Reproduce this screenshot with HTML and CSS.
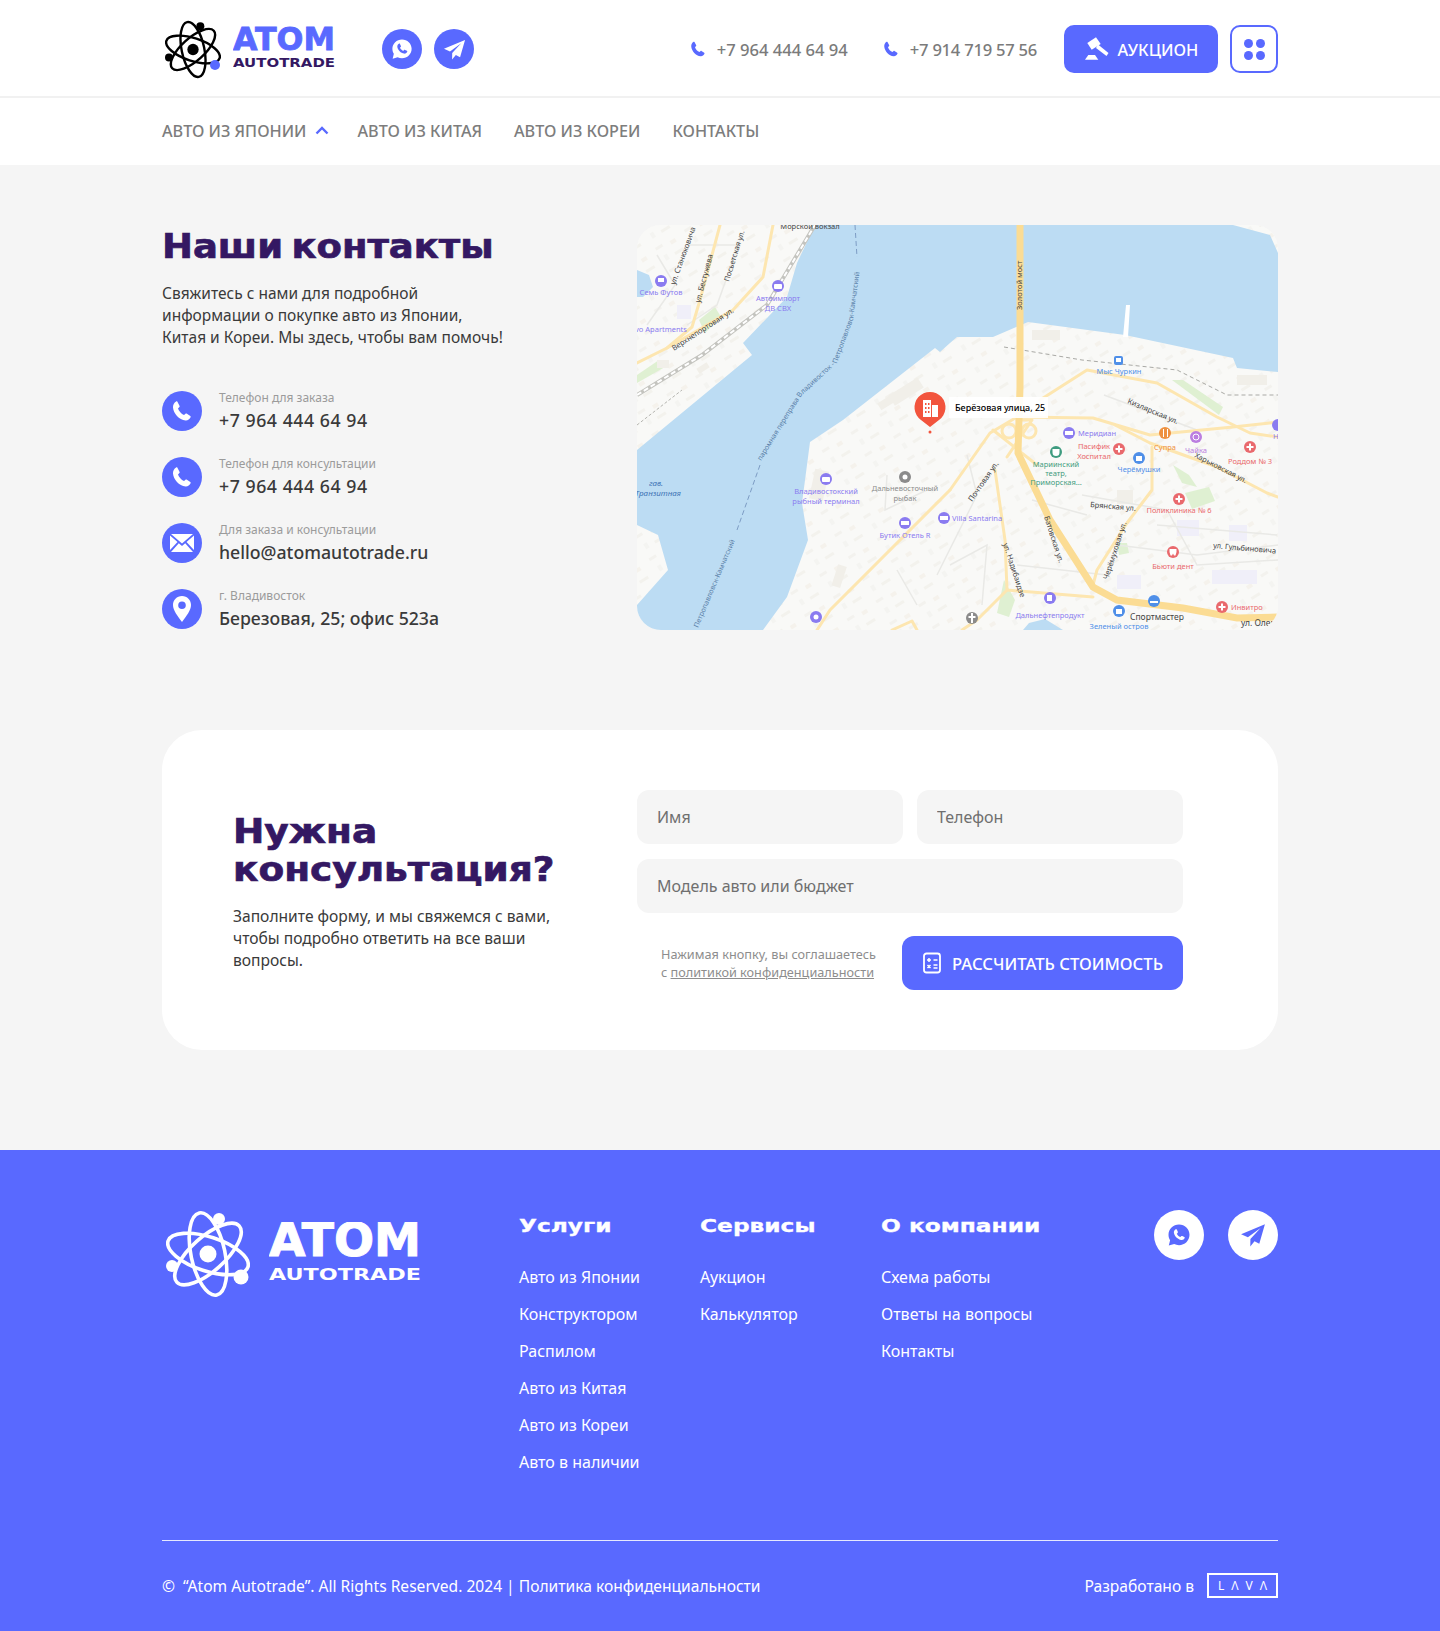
FILE: index.html
```html
<!DOCTYPE html>
<html lang="ru">
<head>
    <meta charset="UTF-8">
    <meta name="viewport" content="width=device-width, initial-scale=1.0">
    <title>Контакты - Atom Autotrade</title>
    <link rel="stylesheet" href="styles.css">
</head>
<body>
    <svg class="sprite" width="0" height="0" aria-hidden="true">
        <symbol id="i-phone" viewBox="0 0 24 24">
            <path d="M7.3 2.6 9.6 7c.2.4.1.8-.2 1.1L8 9.5c.9 2.6 3.3 5.500 6 6.600l1.500-1.400c.3-.3.8-.3 1.100-.1l3.700 2.500c.4.3.5.8.3 1.200-1 2-2.900 3.400-5 3.200C9 21 3.500 14.500 3 8.500 2.800 6 4.200 3.600 6.100 2.400c.4-.2.9-.1 1.200.2z"/>
        </symbol>
        <symbol id="i-plane" viewBox="0 0 24 24">
            <path d="M23 2 1 11.200l6.300 2.900L19 5.600 9.600 15.700l-.1 6.800 3.900-4.700 4.400 2.200z"/>
        </symbol>
        <symbol id="i-whatsapp" viewBox="0 0 24 24">
            <path fill-rule="evenodd" d="M12 1.500C6.200 1.500 1.500 6.100 1.500 11.800c0 2 .6 3.900 1.600 5.500L1.800 22.500l5.400-1.400c1.400.7 3.100 1.100 4.800 1.100 5.800 0 10.500-4.600 10.500-10.400S17.800 1.500 12 1.500zM8.600 6.300c.5-.3 1-.2 1.200.3l1 2.200c.2.400.1.800-.2 1.100l-.8.800c.7 1.400 1.900 2.600 3.500 3.400l.9-.9c.3-.3.700-.4 1.100-.2l2 1c.5.200.6.700.4 1.100-.6 1.400-2 2.200-3.400 1.900-3.600-.7-6.800-3.800-7.400-7.300-.2-1.300.6-2.700 1.700-3.400z"/>
        </symbol>
        <symbol id="i-atom" viewBox="0 0 84 88">
            <g fill="none" stroke="currentColor" stroke-width="3.600">
                <ellipse cx="42" cy="44" rx="17" ry="42" transform="rotate(-12 42 44)"/>
                <ellipse cx="42" cy="44" rx="17" ry="42" transform="rotate(-72 42 44)"/>
                <ellipse cx="42" cy="44" rx="17" ry="42" transform="rotate(48 42 44)"/>
            </g>
            <circle cx="42" cy="44" r="8.500" fill="currentColor"/>
            <circle cx="53" cy="9" r="6" fill="currentColor"/>
            <circle cx="6" cy="56" r="6" fill="currentColor"/>
        </symbol>
    </svg>

    <header class="topbar">
        <div class="container topbar-row">
            <a class="logo" href="#">
                <svg class="logo-mark" width="56" height="59"><use href="#i-atom"/><circle cx="50" cy="45" r="5" fill="#5969ff"/></svg>
                <svg class="logo-word" width="102" height="60" viewBox="0 0 102 60">
                    <text x="0" y="31" textLength="102" lengthAdjust="spacingAndGlyphs" class="word-atom">ATOM</text>
                    <text x="0" y="48" textLength="102" lengthAdjust="spacingAndGlyphs" class="word-auto">AUTOTRADE</text>
                </svg>
            </a>
            <div class="socials">
                <a class="round" href="#"><svg width="22" height="22"><use href="#i-whatsapp"/></svg></a>
                <a class="round" href="#"><svg width="23" height="23"><use href="#i-plane"/></svg></a>
            </div>
            <div class="phones">
                <a class="phone" href="#"><svg width="18" height="18"><use href="#i-phone"/></svg>+7 964 444 64 94</a>
                <a class="phone" href="#"><svg width="18" height="18"><use href="#i-phone"/></svg>+7 914 719 57 56</a>
            </div>
            <a class="btn-auction" href="#">
                <svg width="26" height="26" viewBox="0 0 26 26" fill="#fff">
                    <path d="M3.300 7 12 1.300 16.700 8 7.700 13.700z"/>
                    <path d="M14 8.500 24.500 17 22.500 20 12 12z"/>
                    <path d="M4.300 19H11l3.300 4.700H1z"/>
                </svg>
                Аукцион
            </a>
            <a class="btn-grid" href="#"><i></i><i></i><i></i><i></i></a>
        </div>
    </header>

    <nav class="mainnav">
        <div class="container mainnav-row">
            <a href="#">Авто из Японии <svg width="14" height="9" viewBox="0 0 14 9" fill="none" stroke="#5969ff" stroke-width="2.400"><path d="M1.500 7.500 7 2l5.500 5.500"/></svg></a>
            <a href="#">Авто из Китая</a>
            <a href="#">Авто из Кореи</a>
            <a href="#">Контакты</a>
        </div>
    </nav>

    <main class="page">
        <section class="container contacts">
            <div class="contacts-info">
                <h1 class="title">Наши контакты</h1>
                <p class="lead">Свяжитесь с нами для подробной<br>информации о покупке авто из Японии,<br>Китая и Кореи. Мы здесь, чтобы вам помочь!</p>
                <ul class="contact-list">
                    <li>
                        <span class="round"><svg width="24" height="24"><use href="#i-phone"/></svg></span>
                        <div><small>Телефон для заказа</small><b class="num">+7 964 444 64 94</b></div>
                    </li>
                    <li>
                        <span class="round"><svg width="24" height="24"><use href="#i-phone"/></svg></span>
                        <div><small>Телефон для консультации</small><b class="num">+7 964 444 64 94</b></div>
                    </li>
                    <li>
                        <span class="round"><svg width="26" height="20" viewBox="0 0 26 20"><path d="M2 1h22L13 10.500zM1 2.500l7.500 6.500L1 17zM25 2.500 17.500 9 25 17zM9.800 10.200 13 13l3.200-2.800L24 19H2z"/></svg></span>
                        <div><small>Для заказа и консультации</small><b>hello@atomautotrade.ru</b></div>
                    </li>
                    <li>
                        <span class="round"><svg width="20" height="28" viewBox="0 0 20 28"><path fill-rule="evenodd" d="M10 1C4.800 1 1 5 1 10c0 5 4.500 11 9 17 4.500-6 9-12 9-17 0-5-3.800-9-9-9zm0 5.500a3.800 3.800 0 1 1 0 7.600 3.800 3.800 0 0 1 0-7.600z"/></svg></span>
                        <div><small>г. Владивосток</small><b>Березовая, 25; офис 523а</b></div>
                    </li>
                </ul>
            </div>

            <svg class="map" viewBox="0 0 641 405" width="641" height="405">
                <defs>
                    <pattern id="blocks" width="34" height="26" patternUnits="userSpaceOnUse" patternTransform="rotate(-32)">
                        <rect x="3" y="3" width="8" height="3" fill="#f3f2ee"/>
                        <rect x="19" y="5" width="6" height="4" fill="#f5f2ec"/>
                        <rect x="6" y="14" width="4" height="6" fill="#f4f4f1"/>
                        <rect x="17" y="17" width="10" height="3" fill="#f3f2ed"/>
                    </pattern>
                </defs>
                <rect width="641" height="405" fill="#f9f9f7"/>
                <rect width="641" height="405" fill="url(#blocks)"/>

                <!-- вода -->
                <path class="water" d="M178 0 160 38 150 72 106 118 115 130 0 225V300L21 310 31 345 0 380V405H126L150 372 171 315 165 278 173 217 206 195 298 123 303 127 313 118 320 112 356 112 391 97 488 110 596 133 600 143 641 147V28L633 10 596 0z"/>
                <path class="water" d="M0 45 12 50 16 62 6 72H0zM386 405 392 398 408 394 426 405z"/>
                <path d="M486 112 489 80 493 80 491 112z" fill="#fff"/>

                <!-- парки -->
                <g fill="#dff0d2">
                    <path d="M535 155 546 155 586 182 582 190z"/>
                    <path d="M62 95 78 82 84 92 68 108z"/>
                    <path d="M536 240 552 250 560 262 545 258z"/>
                    <path d="M548 268 572 262 578 276 555 284z"/>
                    <path d="M367 355 378 375 372 392 360 388z"/>
                    <path d="M0 150 22 135 28 142 0 158z"/>
                    <path d="M480 318 490 318 492 328 482 330z"/>
                </g>

                <!-- кварталы -->
                <g fill="#f1efe9">
                    <rect x="395" y="105" width="28" height="10"/>
                    <rect x="240" y="170" width="30" height="8" transform="rotate(-32 255 174)"/>
                    <rect x="252" y="160" width="34" height="12" transform="rotate(-32 270 166)"/>
                    <rect x="175" y="245" width="14" height="30" transform="rotate(12 182 260)"/>
                    <rect x="198" y="340" width="9" height="22" transform="rotate(18 202 350)"/>
                    <rect x="20" y="135" width="12" height="8"/>
                    <rect x="60" y="140" width="12" height="6" transform="rotate(-32 66 143)"/>
                    <rect x="480" y="265" width="16" height="14"/>
                    <rect x="600" y="150" width="30" height="10"/>
                </g>
                <g fill="#f0eff9">
                    <rect x="540" y="295" width="22" height="16"/>
                    <rect x="592" y="300" width="18" height="16"/>
                    <rect x="480" y="350" width="24" height="14"/>
                    <rect x="575" y="345" width="45" height="14"/>
                    <rect x="40" y="80" width="14" height="14"/>
                </g>

                <!-- железная дорога и проезды -->
                <g fill="none">
                    <path d="M0 170 65 130 130 80 178 0" stroke="#c4c4bf" stroke-width="4"/>
                    <path d="M0 170 65 130 130 80 178 0" stroke="#fff" stroke-width="2" stroke-dasharray="5 3"/>
                    <path d="M0 200 45 165" stroke="#b5b5b0" stroke-dasharray="3 2"/>
                    <path d="M367 122 445 135 540 145 590 170 641 170" stroke="#a9a9a5" stroke-dasharray="4 3"/>
                    <g stroke="#e9e9e6" stroke-width="1.500">
                        <path d="M467 170 560 205M445 270 530 285 560 340 641 335M395 275 450 290M380 340 470 350M480 320 560 330 641 320M520 300 640 310M250 250 248 285 290 265M330 230 340 270 300 350M260 345 280 380M313 340 350 320 345 380M20 30 38 60 10 100M50 20 100 20M105 10 80 80 50 100"/>
                    </g>
                </g>

                <!-- дороги -->
                <g fill="none" stroke="#fde6b0" stroke-width="3" stroke-linecap="round" stroke-linejoin="round">
                    <path d="M313 265 353 208 380 192 456 193 513 210 596 202 641 197"/>
                    <path d="M403 175 450 145 520 158 580 192 613 208 641 212"/>
                    <path d="M356 205 400 240M380 195 395 195 370 232"/>
                    <path d="M513 218 580 242 630 268 641 272M478 200 513 218"/>
                    <path d="M515 222 515 265 490 298 460 345 456 360"/>
                    <path d="M358 245 368 315 370 365 456 372"/>
                    <path d="M180 405 193 385 313 265"/>
                    <path d="M0 138 30 123 55 102 63 75 83 0"/>
                    <path d="M30 123 96 85 126 52 136 0"/>
                    <path d="M255 405 275 396 280 405M325 405 340 395 370 365"/>
                    <circle cx="372" cy="206" r="7"/><circle cx="392" cy="206" r="7"/>
                </g>
                <path d="M383 0V162L381 228 413 295 456 362 480 375 546 383 600 393 641 392" fill="none" stroke="#fbdc94" stroke-width="7"/>

                <!-- паром -->
                <g fill="none" stroke="#7d9cc4" stroke-dasharray="5 3">
                    <path d="M218 0 220 32"/>
                    <path d="M123 240 100 305"/>
                </g>
                <path id="ferry" d="M124 236 165 170 200 138 216 95 224 36" fill="none"/>
                <text class="ferry"><textPath href="#ferry">паромная переправа Владивосток - Петропавловск-Камчатский</textPath></text>
                <text class="ferry" transform="translate(61 403) rotate(-67)">Петропавловск-Камчатский</text>
                <text class="harbor" x="19" y="261" text-anchor="middle">гав.</text>
                <text class="harbor" x="21" y="271" text-anchor="middle">Транзитная</text>

                <!-- улицы -->
                <g class="street">
                    <text x="173" y="4" text-anchor="middle">Морской вокзал</text>
                    <text transform="translate(63 78) rotate(-75)">ул. Бестужева</text>
                    <text transform="translate(38 60) rotate(-70)">ул. Станюковича</text>
                    <text transform="translate(92 57) rotate(-73)">Посьетская ул.</text>
                    <text transform="translate(37 126) rotate(-33)">Верхнепортовая ул.</text>
                    <text transform="translate(385 85) rotate(-90)">Золотой мост</text>
                    <text transform="translate(490 178) rotate(23)">Кизлярская ул.</text>
                    <text transform="translate(557 232) rotate(27)">Харьковская ул.</text>
                    <text transform="translate(453 282) rotate(5)">Брянская ул.</text>
                    <text transform="translate(335 277) rotate(-55)">Почтовая ул.</text>
                    <text transform="translate(471 355) rotate(-72)">Черёмуховая ул.</text>
                    <text transform="translate(407 292) rotate(72)">Батовская ул.</text>
                    <text transform="translate(366 319) rotate(72)">ул. Надибаидзе</text>
                    <text transform="translate(576 323) rotate(5)">ул. Гульбиновича</text>
                    <text x="493" y="395" class="street-big">Спортмастер</text>
                    <text x="604" y="401" class="street-big">ул. Олег</text>
                </g>

                <!-- объекты -->
                <g class="poi poi-violet">
                    <circle cx="24" cy="56" r="6"/><circle cx="141" cy="61" r="6"/><circle cx="189" cy="254" r="6"/><circle cx="268" cy="298" r="6"/><circle cx="307" cy="293" r="6"/><circle cx="432" cy="208" r="6"/><circle cx="413" cy="373" r="6"/><circle cx="641" cy="200" r="6"/>
                    <circle cx="179" cy="392" r="6"/>
                    <text x="24" y="70" text-anchor="middle">Семь Футов</text>
                    <text x="141" y="76" text-anchor="middle">Автоимпорт</text>
                    <text x="141" y="86" text-anchor="middle">ДВ СВХ</text>
                    <text x="-2" y="107">vo Apartments</text>
                    <text x="189" y="269" text-anchor="middle">Владивостокский</text>
                    <text x="189" y="279" text-anchor="middle">рыбный терминал</text>
                    <text x="268" y="313" text-anchor="middle">Бутик Отель R</text>
                    <text x="315" y="296">Villa Santarina</text>
                    <text x="441" y="211">Меридиан</text>
                    <text x="413" y="393" text-anchor="middle">Дальнефтепродукт</text>
                </g>
                <g class="poi-glyphs" fill="#fff">
                    <rect x="137" y="59" width="8" height="5" rx="1"/><rect x="185" y="252" width="8" height="5" rx="1"/><rect x="264" y="296" width="8" height="4"/><rect x="303" y="291" width="8" height="4"/><rect x="428" y="206" width="8" height="4"/><rect x="21" y="53" width="6" height="4"/><rect x="410" y="370" width="5" height="6"/>
                    <circle cx="179" cy="392" r="2.500"/>
                </g>
                <g class="poi poi-grey">
                    <circle cx="268" cy="252" r="6"/><circle cx="335" cy="393" r="6"/>
                    <text x="268" y="266" text-anchor="middle">Дальневосточный</text>
                    <text x="268" y="276" text-anchor="middle">рыбак</text>
                </g>
                <circle cx="268" cy="252" r="2.500" fill="#fff"/>
                <path d="M334 388h2v3h2.500v2H336v5h-2v-5h-2.500v-2h2.500z" fill="#fff"/>
                <g class="poi poi-red">
                    <circle cx="482" cy="224" r="6"/><circle cx="613" cy="222" r="6"/><circle cx="542" cy="274" r="6"/><circle cx="536" cy="327" r="6"/><circle cx="585" cy="382" r="6"/>
                    <text x="457" y="224" text-anchor="middle">Пасифик</text>
                    <text x="457" y="234" text-anchor="middle">Хоспитал</text>
                    <text x="613" y="239" text-anchor="middle">Роддом № 3</text>
                    <text x="542" y="288" text-anchor="middle">Поликлиника № 6</text>
                    <text x="536" y="344" text-anchor="middle">Бьюти дент</text>
                    <text x="594" y="385">Инвитро</text>
                </g>
                <path d="M481 220.500h2v2.500h2.500v2H483v2.500h-2V225h-2.500v-2h2.500zM612 218.500h2v2.500h2.500v2H614v2.500h-2V223h-2.500v-2h2.500zM541 270.500h2v2.500h2.500v2H543v2.500h-2V275h-2.500v-2h2.500zM584 378.500h2v2.500h2.500v2H586v2.500h-2V383h-2.500v-2h2.500zM532.500 324h7v3l-1 3.500h-1.500l-1-2-1 2h-1.500l-1-3.500z" fill="#fff"/>
                <g class="poi poi-green">
                    <circle cx="419" cy="227" r="6"/>
                    <text x="419" y="242" text-anchor="middle">Мариинский</text>
                    <text x="419" y="251" text-anchor="middle">театр,</text>
                    <text x="419" y="260" text-anchor="middle">Приморская...</text>
                </g>
                <path d="M415.500 224h7v3.500a3.500 3.500 0 0 1-7 0z" fill="#fff"/>
                <g class="poi poi-blue">
                    <circle cx="502" cy="233" r="6"/><circle cx="482" cy="386" r="6"/>
                    <rect x="477" y="131" width="9" height="9" rx="2"/>
                    <circle cx="517" cy="376" r="6"/>
                    <text x="502" y="247" text-anchor="middle">Черёмушки</text>
                    <text x="482" y="149" text-anchor="middle">Мыс Чуркин</text>
                    <text x="482" y="404" text-anchor="middle">Зеленый остров</text>
                </g>
                <path d="M499 231h6v5h-6zM479 384h6v5h-6zM479 133h5v4h-5zM513 376h8v2h-8z" fill="#fff"/>
                <g class="poi poi-orange">
                    <circle cx="528" cy="208" r="6"/>
                    <text x="528" y="225" text-anchor="middle">Супра</text>
                </g>
                <g class="poi poi-pink">
                    <circle cx="559" cy="212" r="6"/>
                    <text x="559" y="228" text-anchor="middle">Чайка</text>
                </g>
                <circle cx="559" cy="212" r="3" fill="none" stroke="#fff"/>
                <path d="M526 204h1v8h-1zM530 204h1v8h-1z" fill="#fff"/>
                <text class="poi-more" x="636" y="214">Н</text>

                <!-- метка -->
                <rect x="312" y="172" width="99" height="21" fill="#fff" opacity=".92"/>
                <text class="pin-label" x="318" y="186">Берёзовая улица, 25</text>
                <path d="M293 202 284 195A15.500 15.500 0 1 1 302 195z" fill="#f2543d"/>
                <circle cx="293" cy="207" r="1.500" fill="#f2543d"/>
                <path d="M286 175h8v17h-8zM295 180h6v12h-6z" fill="#fff"/>
                <path d="M288 178h1.500v2H288zM291 178h1.500v2H291zM288 182h1.500v2H288zM291 182h1.500v2H291zM288 186h1.500v2H288zM291 186h1.500v2H291z" fill="#f2543d"/>
            </svg>
        </section>

        <section class="container">
            <div class="consult">
                <div class="consult-text">
                    <h2 class="title">Нужна<br>консультация?</h2>
                    <p class="lead">Заполните форму, и мы свяжемся с вами, чтобы подробно ответить на все ваши вопросы.</p>
                </div>
                <form class="consult-form">
                    <input type="text" placeholder="Имя">
                    <input type="text" placeholder="Телефон">
                    <input class="wide" type="text" placeholder="Модель авто или бюджет">
                    <div class="form-bottom">
                        <p class="agree">Нажимая кнопку, вы соглашаетесь<br>с <a href="#">политикой конфиденциальности</a></p>
                        <button type="submit">
                            <svg width="20" height="22" viewBox="0 0 20 22" fill="none" stroke="#fff" stroke-width="1.800">
                                <rect x="2" y="1.500" width="16" height="19" rx="2.500"/>
                                <path d="M5 8h4M7 6v4M11.500 8h4M5.500 13l3 3M8.500 13l-3 3M11.500 13h4M11.500 16h4" stroke-width="1.500"/>
                            </svg>
                            Рассчитать стоимость
                        </button>
                    </div>
                </form>
            </div>
        </section>
    </main>

    <footer class="footer">
        <div class="container">
            <div class="footer-top">
                <a class="logo footer-logo" href="#">
                    <svg class="logo-mark" width="84" height="88"><use href="#i-atom"/><circle cx="75" cy="67" r="7.500" fill="#fff"/></svg>
                    <svg class="logo-word" width="152" height="62" viewBox="0 0 152 62">
                        <text x="0" y="34" textLength="152" lengthAdjust="spacingAndGlyphs" class="word-atom big">ATOM</text>
                        <text x="0" y="58" textLength="152" lengthAdjust="spacingAndGlyphs" class="word-auto big">AUTOTRADE</text>
                    </svg>
                </a>
                <div class="footer-col">
                    <h4>Услуги</h4>
                    <a href="#">Авто из Японии</a>
                    <a href="#">Конструктором</a>
                    <a href="#">Распилом</a>
                    <a href="#">Авто из Китая</a>
                    <a href="#">Авто из Кореи</a>
                    <a href="#">Авто в наличии</a>
                </div>
                <div class="footer-col">
                    <h4>Сервисы</h4>
                    <a href="#">Аукцион</a>
                    <a href="#">Калькулятор</a>
                </div>
                <div class="footer-col">
                    <h4>О компании</h4>
                    <a href="#">Схема работы</a>
                    <a href="#">Ответы на вопросы</a>
                    <a href="#">Контакты</a>
                </div>
                <div class="socials footer-socials">
                    <a class="round" href="#"><svg width="24" height="24"><use href="#i-whatsapp"/></svg></a>
                    <a class="round" href="#"><svg width="26" height="26"><use href="#i-plane"/></svg></a>
                </div>
            </div>
            <div class="footer-bottom">
                <p>©&nbsp; “Atom Autotrade”. All Rights Reserved. 2024 | Политика конфиденциальности</p>
                <div class="dev">Разработано в <span class="lava">LΛVΛ</span></div>
            </div>
        </div>
    </footer>
</body>
</html>
```

FILE: styles.css
```css
* {
    margin: 0;
    padding: 0;
    box-sizing: border-box;
}

body {
    font-family: "Noto Sans", "Open Sans", sans-serif;
    font-size: 16px;
    color: #3a3a3a;
    background: #fff;
}

a {
    color: inherit;
    text-decoration: none;
}

.sprite {
    display: block;
    width: 0;
    height: 0;
}

.container {
    width: 1116px;
    margin: 0 auto;
}

.round {
    display: flex;
    align-items: center;
    justify-content: center;
    width: 40px;
    height: 40px;
    border-radius: 50%;
    background: #5969ff;
    fill: #fff;
    flex-shrink: 0;
}

/* шапка */
.topbar {
    height: 98px;
    border-bottom: 2px solid #f1f1f1;
}

.topbar-row {
    display: flex;
    align-items: center;
    height: 96px;
    padding-top: 2px;
}

.logo {
    display: flex;
    align-items: center;
    color: #000;
    margin-left: 3px;
}

.logo-word {
    margin-left: 12px;
}

.word-atom {
    font-family: "DejaVu Sans", sans-serif;
    font-weight: 700;
    font-size: 32px;
    fill: #5969ff;
    stroke: #5969ff;
    stroke-width: 0.8px;
}

.word-auto {
    font-family: "DejaVu Sans", sans-serif;
    font-weight: 700;
    font-size: 12.4px;
    fill: #341863;
}

.socials {
    display: flex;
    gap: 12px;
    margin-left: 47px;
}

.phones {
    display: flex;
    gap: 34px;
    margin-left: auto;
}

.phone {
    display: flex;
    align-items: center;
    gap: 10px;
    font-size: 16.6px;
    font-weight: 500;
    color: #7b7b7b;
    fill: #5969ff;
}

.phone + .phone {
    letter-spacing: -0.25px;
}

.btn-auction {
    display: flex;
    align-items: center;
    justify-content: center;
    gap: 8px;
    width: 154px;
    height: 48px;
    margin-left: 27px;
    border-radius: 10px;
    background: #5969ff;
    color: #fff;
    font-size: 16.4px;
    font-weight: 500;
    text-transform: uppercase;
}

.btn-grid {
    display: grid;
    grid-template-columns: 9px 9px;
    gap: 3px;
    justify-content: center;
    align-content: center;
    width: 48px;
    height: 48px;
    margin-left: 12px;
    border: 2px solid #5969ff;
    border-radius: 10px;
}

.btn-grid i {
    width: 9px;
    height: 9px;
    border-radius: 50%;
    background: #5969ff;
}

.mainnav-row {
    display: flex;
    align-items: center;
    gap: 32px;
    height: 67px;
    padding-bottom: 2px;
}

.mainnav a {
    display: flex;
    align-items: center;
    gap: 8px;
    font-size: 16.2px;
    font-weight: 500;
    color: #7d7d7d;
    text-transform: uppercase;
}

.mainnav svg {
    margin-right: -3px;
}

/* контакты */
.page {
    background: #f5f5f5;
    padding: 60px 0 100px;
}

.contacts {
    display: flex;
    justify-content: space-between;
    margin-bottom: 100px;
}

.title {
    font-family: "DejaVu Sans", sans-serif;
    font-weight: 700;
    font-size: 33px;
    line-height: 38px;
    color: #341863;
    -webkit-text-stroke: 0.7px #341863;
    transform: scaleX(1.135);
    transform-origin: left center;
}

.lead {
    font-size: 15.5px;
    line-height: 22px;
    color: #3a3a3a;
}

.contacts-info .title {
    padding-top: 3px;
    margin-bottom: 16px;
    word-spacing: -4px;
    transform: scaleX(1.12);
}

.contact-list {
    list-style: none;
    display: flex;
    flex-direction: column;
    gap: 24px;
    margin-top: 42px;
}

.contact-list li {
    display: flex;
    align-items: center;
    gap: 17px;
}

.contact-list small {
    display: block;
    font-size: 12px;
    line-height: 16px;
    margin-bottom: 2px;
    color: #9b9b9b;
}

.contact-list b {
    display: block;
    font-size: 17.7px;
    line-height: 24px;
    font-weight: 500;
    color: #3a3a3a;
}

.contact-list .num {
    letter-spacing: 0.55px;
}

.map {
    display: block;
    border-radius: 24px;
    background: #f9f9f7;
}

.water {
    fill: #bcdcf3;
}

.map text {
    font-family: "Noto Sans", sans-serif;
    font-size: 7.5px;
}

.map .ferry {
    font-size: 7px;
    fill: #5a7fa8;
}

.map .harbor {
    font-size: 8px;
    font-style: italic;
    fill: #3f74b5;
}

.street text {
    fill: #444;
}

.map .street-big {
    font-size: 8.5px;
}

.poi-violet { fill: #8a7bf0; }
.poi-grey { fill: #8b8b8b; }
.poi-red { fill: #e9696d; }
.poi-green { fill: #3f9c80; }
.poi-blue { fill: #4f8fe8; }
.poi-orange { fill: #ee9140; }
.poi-pink { fill: #bb7ee0; }

.map .poi-more {
    fill: #8a7bf0;
}

.map .pin-label {
    font-size: 9px;
    font-weight: 500;
    fill: #000;
}

/* консультация */
.consult {
    display: flex;
    justify-content: space-between;
    height: 320px;
    padding: 60px 95px 60px 71px;
    border-radius: 40px;
    background: #fff;
}

.consult-text {
    width: 330px;
    padding-top: 23px;
}

.consult-text .title {
    margin-bottom: 16px;
}

.consult-text .lead {
    font-size: 15.6px;
}

.consult-form {
    display: grid;
    grid-template-columns: 266px 266px;
    align-content: start;
    column-gap: 14px;
    row-gap: 15px;
    width: 546px;
}

.consult-form input {
    width: 100%;
    height: 54px;
    padding: 0 20px;
    border: none;
    border-radius: 12px;
    background: #f5f5f5;
    font-family: inherit;
    font-size: 16px;
    color: #3a3a3a;
}

.consult-form input::placeholder {
    color: #6f6f6f;
}

.consult-form .wide {
    grid-column: 1 / 3;
}

.form-bottom {
    grid-column: 1 / 3;
    display: flex;
    align-items: center;
    justify-content: space-between;
    margin-top: 8px;
    padding-left: 24px;
}

.agree {
    font-size: 12.7px;
    line-height: 18px;
    color: #8d8d8d;
}

.agree a {
    text-decoration: underline;
}

.form-bottom button {
    display: flex;
    align-items: center;
    justify-content: center;
    gap: 10px;
    width: 281px;
    height: 54px;
    border: none;
    border-radius: 12px;
    background: #5969ff;
    color: #fff;
    font-family: inherit;
    font-size: 16.7px;
    font-weight: 500;
    text-transform: uppercase;
    cursor: pointer;
}

/* подвал */
.footer {
    height: 481px;
    background: #5969ff;
    color: #fff;
}

.footer-top {
    display: flex;
    height: 391px;
    padding-top: 60px;
    border-bottom: 1px solid rgba(255, 255, 255, 0.85);
}

.footer-logo {
    align-items: flex-start;
    color: #fff;
    width: 357px;
    margin-left: 0;
    padding-left: 4px;
}

.footer-logo .logo-word {
    margin-left: 19px;
    margin-top: 12px;
}

.word-atom.big {
    font-size: 46px;
    fill: #fff;
    stroke: #fff;
    stroke-width: 1px;
}

.word-auto.big {
    font-size: 15px;
    fill: #fff;
}

.footer-col {
    display: flex;
    flex-direction: column;
    align-items: flex-start;
    gap: 16px;
    width: 181px;
    margin-top: 1px;
}

.footer-col a {
    font-size: 16px;
    line-height: 21px;
}

.footer-col h4 {
    font-family: "DejaVu Sans", sans-serif;
    font-size: 17px;
    line-height: 30px;
    font-weight: 700;
    margin-bottom: 10px;
    -webkit-text-stroke: 0.3px #fff;
    transform: scaleX(1.37);
    transform-origin: left center;
}

.footer-socials {
    margin-left: auto;
    gap: 24px;
}

.footer-socials .round {
    width: 50px;
    height: 50px;
    background: #fff;
    fill: #5969ff;
}

.footer-bottom {
    display: flex;
    align-items: center;
    justify-content: space-between;
    height: 89px;
    font-size: 15.6px;
}

.dev {
    display: flex;
    align-items: center;
    gap: 13px;
}

.lava {
    width: 71px;
    height: 25px;
    border: 2px solid #fff;
    font-size: 12px;
    line-height: 21px;
    letter-spacing: 7px;
    text-align: center;
    padding-left: 7px;
}
```
